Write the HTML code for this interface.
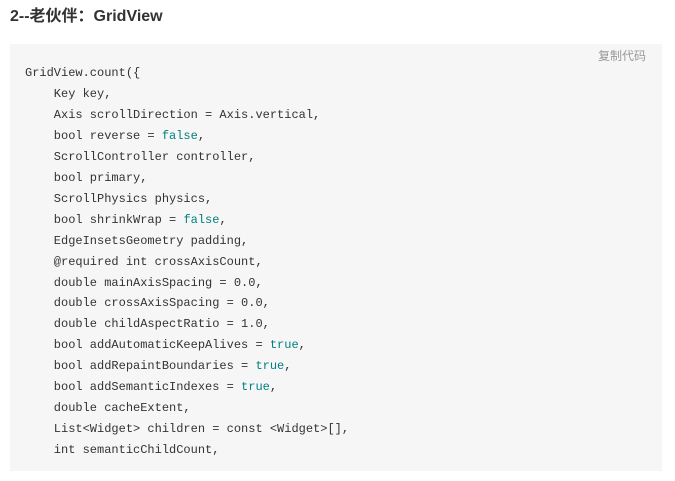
<!DOCTYPE html>
<html><head><meta charset="utf-8"><style>
html,body{margin:0;padding:0;background:#fff;width:675px;height:481px;overflow:hidden}
h3{position:absolute;left:10px;top:6px;margin:0;font:bold 16px/22px "Liberation Sans","Noto Sans CJK SC",sans-serif;color:#333}
.box{position:absolute;left:10px;top:44px;width:652px;height:427px;background:#f6f6f6}
.copy{position:absolute;right:16px;top:3px;font:12px/18px "Liberation Sans","Noto Sans CJK SC",sans-serif;color:#999}
pre{position:absolute;left:15px;top:19px;margin:0;font:12px/20.95px "Liberation Mono",monospace;color:#333}
.k{color:#008080}
</style></head><body>
<h3>2--老伙伴：GridView</h3>
<div class="box"><div class="copy">复制代码</div>
<pre>GridView.count({
    Key key,
    Axis scrollDirection = Axis.vertical,
    bool reverse = <span class="k">false</span>,
    ScrollController controller,
    bool primary,
    ScrollPhysics physics,
    bool shrinkWrap = <span class="k">false</span>,
    EdgeInsetsGeometry padding,
    @required int crossAxisCount,
    double mainAxisSpacing = 0.0,
    double crossAxisSpacing = 0.0,
    double childAspectRatio = 1.0,
    bool addAutomaticKeepAlives = <span class="k">true</span>,
    bool addRepaintBoundaries = <span class="k">true</span>,
    bool addSemanticIndexes = <span class="k">true</span>,
    double cacheExtent,
    List&lt;Widget&gt; children = const &lt;Widget&gt;[],
    int semanticChildCount,</pre></div>
</body></html>
